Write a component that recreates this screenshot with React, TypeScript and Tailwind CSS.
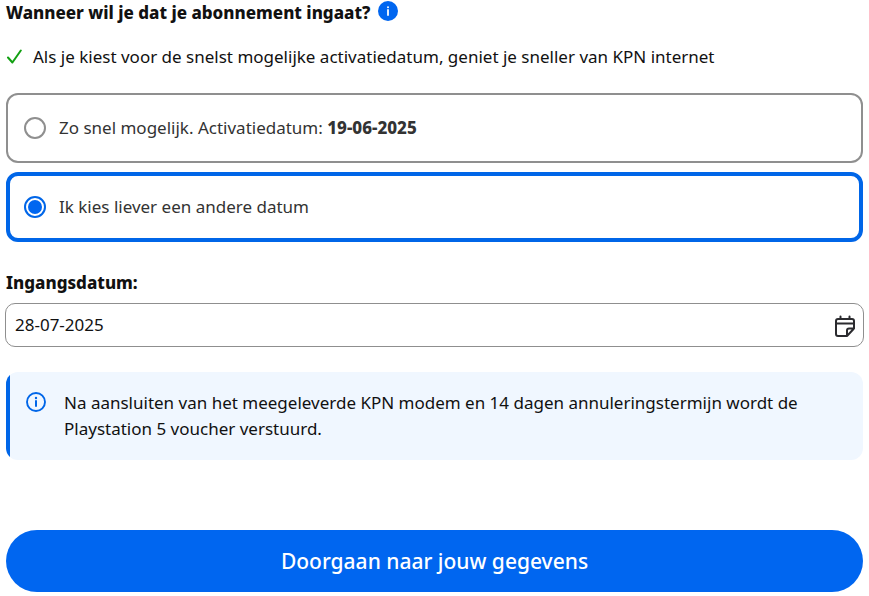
import { useState } from "react";

function InfoBadge() {
  return (
    <svg viewBox="0 0 20 20" className="h-5 w-5" aria-hidden="true">
      <circle cx="10" cy="10" r="10" fill="#0066f0" />
      <circle cx="10" cy="6.3" r="1" fill="#fff" />
      <path d="M10 9v5" stroke="#fff" strokeWidth="1.8" strokeLinecap="round" />
    </svg>
  );
}

function InfoOutline() {
  return (
    <svg viewBox="0 0 20 20" className="h-5 w-5 shrink-0" fill="none" aria-hidden="true">
      <circle cx="10" cy="10" r="9" stroke="#0066e8" strokeWidth="1.9" />
      <circle cx="10" cy="6" r="1.2" fill="#0066e8" />
      <path d="M10 9v5" stroke="#0066e8" strokeWidth="2" strokeLinecap="round" />
    </svg>
  );
}

function Check() {
  return (
    <svg viewBox="0 0 16 16" className="h-4 w-4 shrink-0" fill="none" aria-hidden="true">
      <path d="M2 8.5l4.400 5L14.800 1.500" stroke="#12a012" strokeWidth="2" strokeLinecap="round" strokeLinejoin="round" />
    </svg>
  );
}

function CalendarNote() {
  return (
    <svg viewBox="0 0 22 22" className="h-[22px] w-[22px]" fill="none" stroke="#2b2b2f" strokeWidth="2" strokeLinecap="round" strokeLinejoin="round" aria-hidden="true">
      <path d="M20 13.500V6a2 2 0 0 0-2-2H4a2 2 0 0 0-2 2v13a2 2 0 0 0 2 2h9l7-7.500h-5a2 2 0 0 0-2 2V21" />
      <path d="M2 8.500h18M6.500 1.500V4M15.500 1.500V4" />
    </svg>
  );
}

const radio =
  "h-[22px] w-[22px] shrink-0 appearance-none rounded-full border-2 border-[#8f8f8f] bg-white p-0.5 checked:border-[#0066e8] checked:bg-[#0066f0] checked:bg-clip-content";
const option = "flex h-[70px] cursor-pointer items-center rounded-xl text-[#333333]";

export default function App() {
  const [choice, setChoice] = useState("other");
  const [date, setDate] = useState("28-07-2025");

  const frame = (selected: boolean) =>
    selected ? "border-4 border-[#0066e8] px-3.5" : "border-2 border-[#8f8f8f] px-4";

  return (
    <main className="bg-white px-1.5 pb-1 font-['Noto_Sans','Open_Sans',sans-serif] text-[17px] leading-[26px] text-[#111111]">
      <fieldset>
        <legend className="flex items-center gap-2 font-extrabold">
          Wanneer wil je dat je abonnement ingaat?
          <button type="button" aria-label="Meer informatie" className="pb-1">
            <InfoBadge />
          </button>
        </legend>
        <p className="mt-[18px] flex items-center gap-[11px]">
          <Check />
          Als je kiest voor de snelst mogelijke activatiedatum, geniet je sneller van KPN internet
        </p>
        <div className="mt-[23px] flex flex-col gap-[9px]">
          <label className={`${option} gap-[13px] ${frame(choice === "soon")}`}>
            <input type="radio" name="start" className={radio} checked={choice === "soon"} onChange={() => setChoice("soon")} />
            <span>
              Zo snel mogelijk. Activatiedatum: <strong className="font-extrabold">19-06-2025</strong>
            </span>
          </label>
          <label className={`${option} gap-[13px] ${frame(choice === "other")}`}>
            <input type="radio" name="start" className={radio} checked={choice === "other"} onChange={() => setChoice("other")} />
            <span>Ik kies liever een andere datum</span>
          </label>
        </div>
      </fieldset>

      <label htmlFor="date" className="mt-7 block font-extrabold">
        Ingangsdatum:
      </label>
      <div className="-mx-px mt-[7px] flex h-11 items-center rounded-[10px] border border-[#8f8f8f] pr-[7px] pl-[9px]">
        <input id="date" type="text" value={date} onChange={(e) => setDate(e.target.value)} className="min-w-0 flex-1 bg-transparent outline-none" />
        <button type="button" aria-label="Kies een datum" className="pt-0.5">
          <CalendarNote />
        </button>
      </div>

      <div className="mt-[25px] flex overflow-hidden rounded-xl bg-[#f0f7ff]">
        <span className="w-1 shrink-0 bg-[#0066e8]" />
        <div className="flex gap-[18px] px-4 py-[18px]">
          <div className="pt-0.5">
            <InfoOutline />
          </div>
          <p>Na aansluiten van het meegeleverde KPN modem en 14 dagen annuleringstermijn wordt de Playstation 5 voucher verstuurd.</p>
        </div>
      </div>

      <button type="button" className="mt-[70px] block h-[62px] w-full rounded-full bg-[#0066f0] text-[21px] font-medium text-white">
        Doorgaan naar jouw gegevens
      </button>
    </main>
  );
}
